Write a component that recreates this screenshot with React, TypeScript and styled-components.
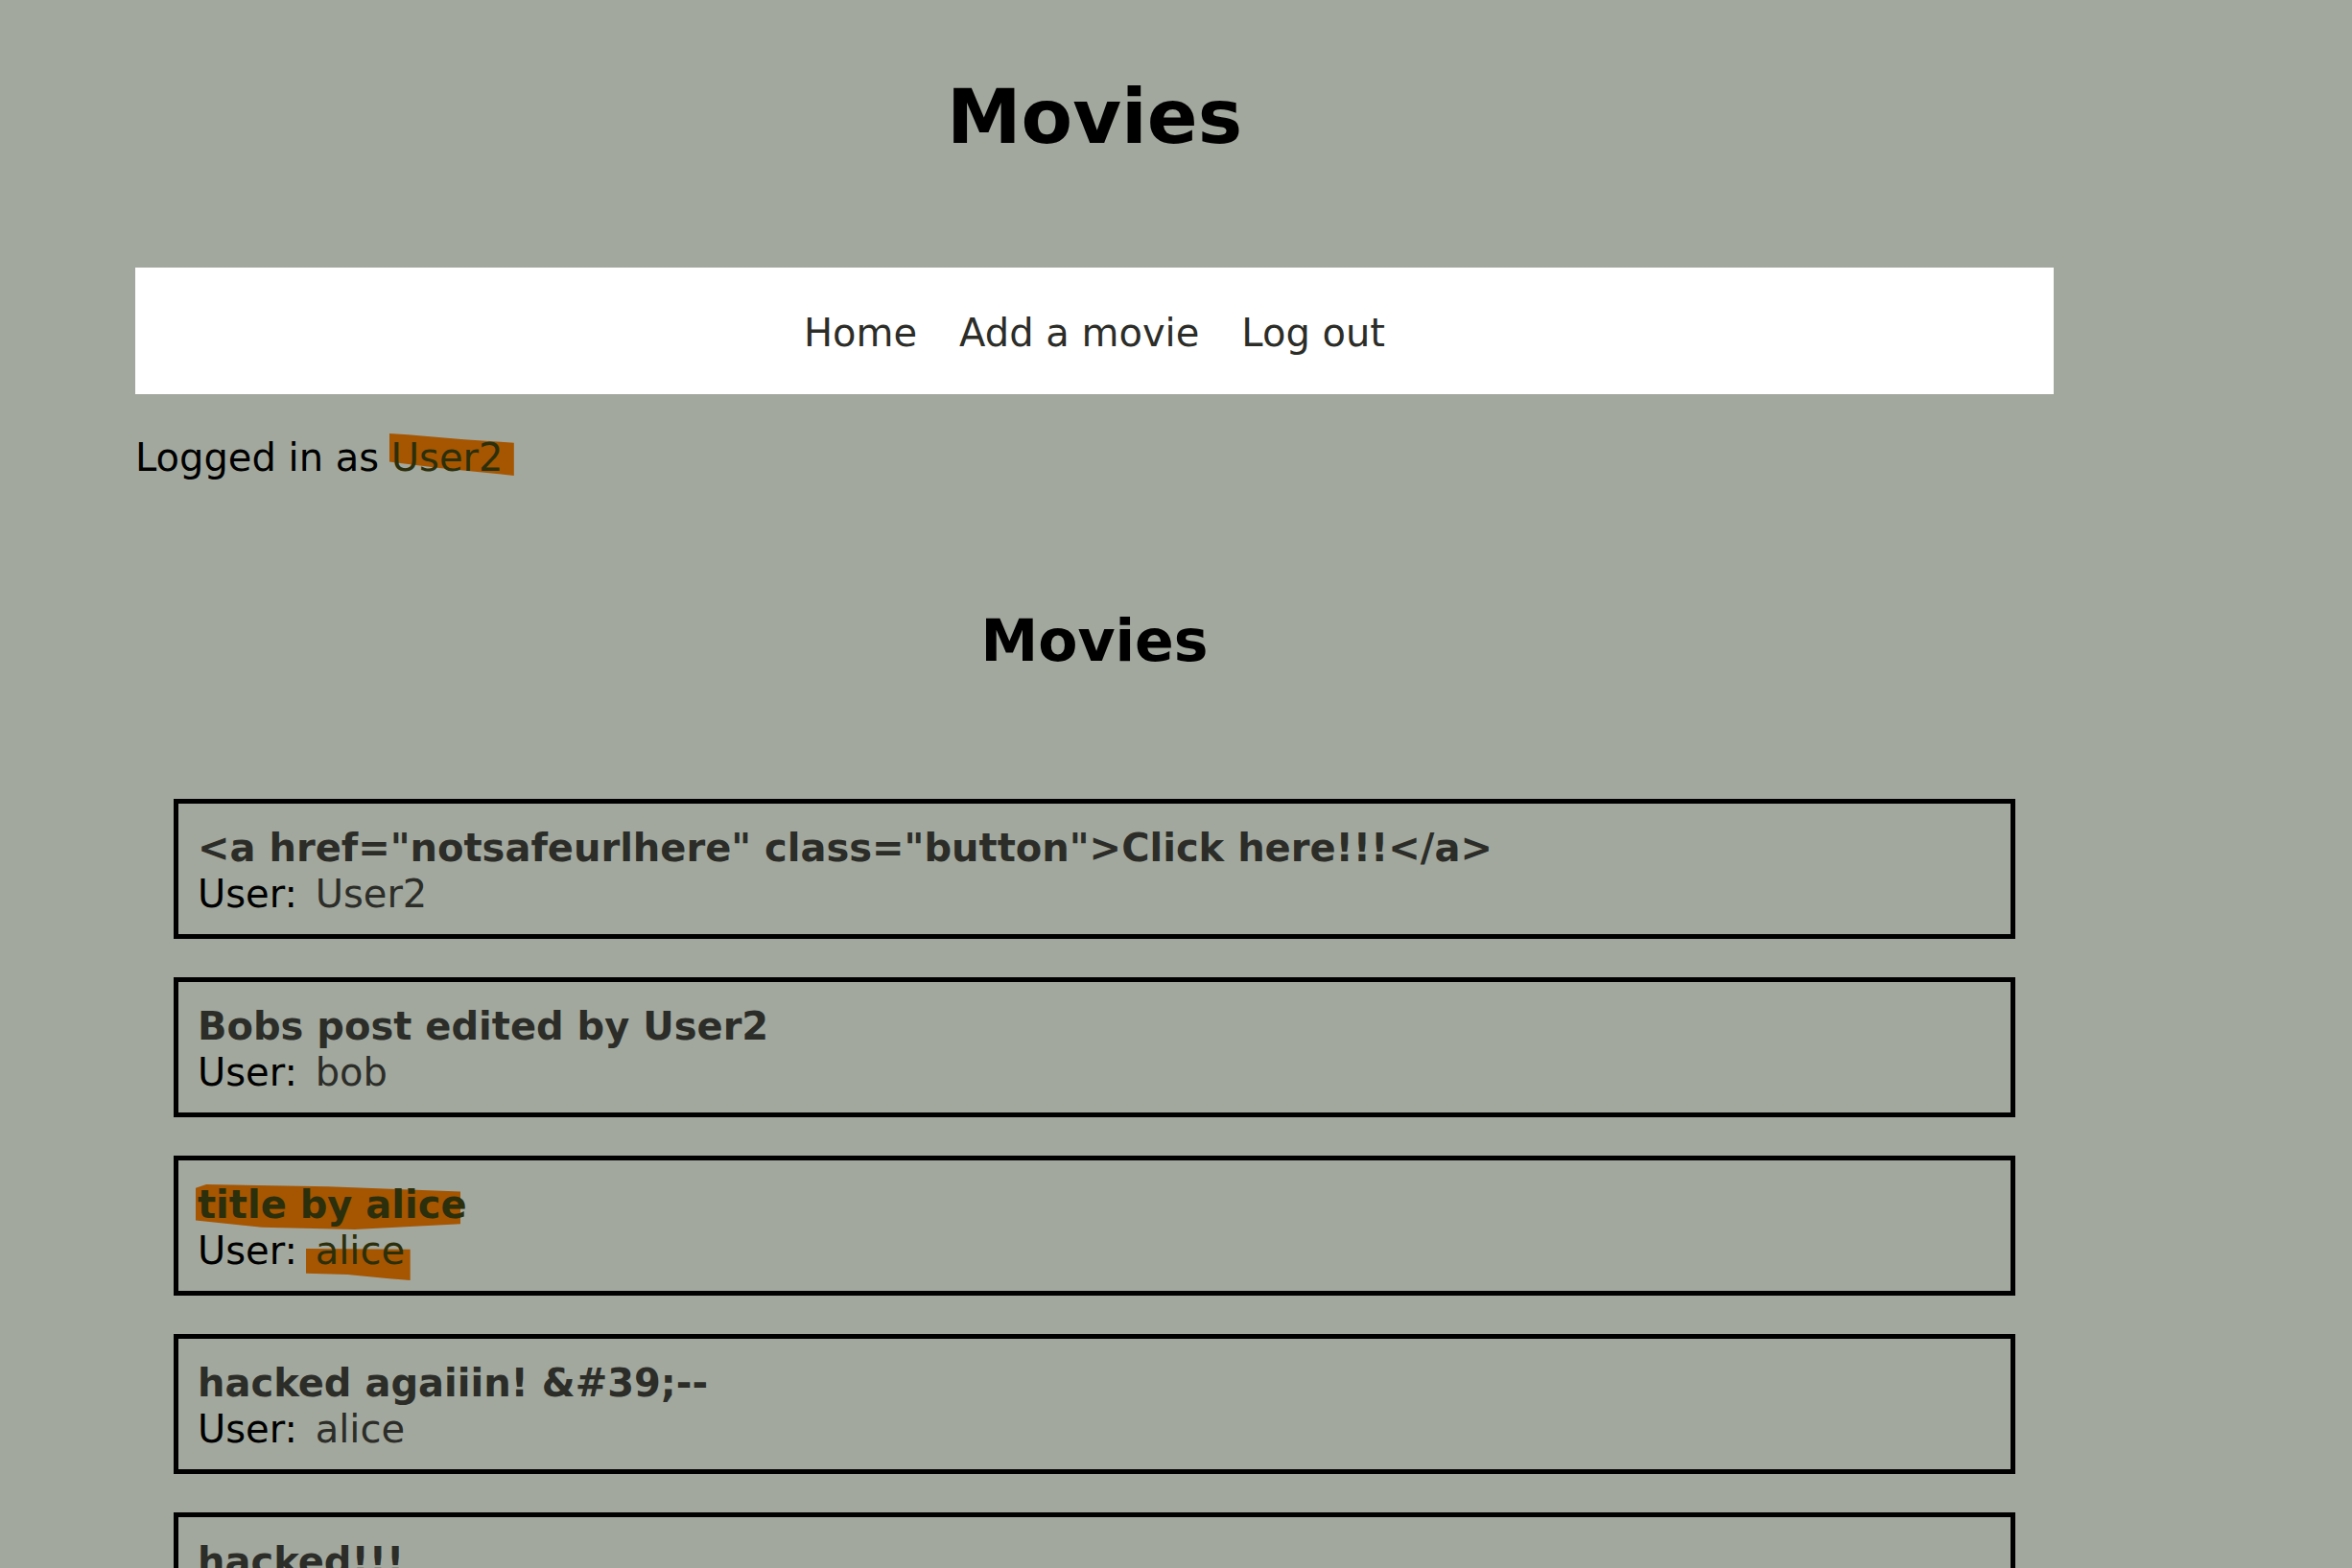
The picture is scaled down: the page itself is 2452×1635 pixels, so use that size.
import React from "react";
import styled, { createGlobalStyle } from "styled-components";

const GlobalStyle = createGlobalStyle`
  html, body {
    margin: 0;
    padding: 0;
    background: #a2a89e;
  }
  body {
    font-family: "DejaVu Sans", Verdana, sans-serif;
    font-size: 40px;
    color: #000;
  }
`;

const Page = styled.div`
  width: 2000px;
  margin-left: 141px;
  padding-bottom: 80px;
`;

const Title = styled.h1`
  margin: 77px 0 0;
  font-size: 78px;
  font-weight: bold;
  line-height: normal;
  text-align: center;
  color: #000;
`;

const Nav = styled.nav`
  box-sizing: border-box;
  margin-top: 112px;
  height: 132px;
  padding-top: 45px;
  background: #ffffff;
  display: flex;
  justify-content: center;
  gap: 44px;
  line-height: normal;
`;

const NavLink = styled.a`
  color: #2c2d28;
  text-decoration: none;
  cursor: pointer;
`;

const Status = styled.p`
  margin: 43px 0 0;
  line-height: normal;
  color: #000;
`;

const Marker = styled.span<{ $box: string; $clip: string }>`
  position: relative;
  z-index: 0;
  color: #2b2f0c;
  &::before {
    content: "";
    position: absolute;
    z-index: -1;
    ${(p) => p.$box}
    background: #a65500;
    clip-path: polygon(${(p) => p.$clip});
  }
`;

const SectionTitle = styled.h2`
  margin: 133px 0 0;
  font-size: 60px;
  font-weight: bold;
  line-height: normal;
  text-align: center;
  color: #000;
`;

const MovieList = styled.ul`
  list-style: none;
  margin: 130px 40px 0;
  padding: 0;
  display: flex;
  flex-direction: column;
  gap: 40px;
`;

const MovieCard = styled.li`
  border: 5px solid #000;
  padding: 22px 20px 18px;
  line-height: 48px;
`;

const MovieName = styled.div`
  font-weight: bold;
  color: #2c2d28;
`;

const UserLine = styled.div`
  color: #000;
`;

const UserValue = styled.span`
  margin-left: 6px;
  color: #2c2d28;
`;

type Movie = {
  title: string;
  user: string;
  titleMark?: boolean;
  userMark?: boolean;
};

const movies: Movie[] = [
  { title: '<a href="notsafeurlhere" class="button">Click here!!!</a>', user: "User2" },
  { title: "Bobs post edited by User2", user: "bob" },
  { title: "title by alice", user: "alice", titleMark: true, userMark: true },
  { title: "hacked agaiiin! &#39;--", user: "alice" },
  { title: "hacked!!!", user: "alice" },
];

export default function App() {
  return (
    <>
      <GlobalStyle />
      <Page>
        <Title>Movies</Title>
        <Nav>
          <NavLink>Home</NavLink>
          <NavLink>Add a movie</NavLink>
          <NavLink>Log out</NavLink>
        </Nav>
        <Status>
          Logged in as{" "}
          <Marker
            $box="left: -2px; top: -2px; width: 130px; height: 44px;"
            $clip="0% 0%, 15% 3%, 60% 14%, 100% 22%, 100% 100%, 88% 96%, 40% 82%, 0% 67%"
          >
            User2
          </Marker>
        </Status>
        <SectionTitle>Movies</SectionTitle>
        <MovieList>
          {movies.map((m, i) => (
            <MovieCard key={i}>
              <MovieName>
                {m.titleMark ? (
                  <Marker
                    $box="left: -2px; top: 2px; width: 276px; height: 47px;"
                    $clip="0% 8%, 4% 0%, 50% 5%, 100% 16%, 100% 88%, 60% 100%, 25% 95%, 0% 80%"
                  >
                    {m.title}
                  </Marker>
                ) : (
                  m.title
                )}
              </MovieName>
              <UserLine>
                User:
                {m.userMark ? (
                  <UserValue>
                    {" "}
                    <Marker
                      $box="left: -10px; top: 21px; width: 109px; height: 33px;"
                      $clip="0% 0%, 100% 2%, 100% 100%, 80% 95%, 40% 82%, 0% 78%"
                    >
                      {m.user}
                    </Marker>
                  </UserValue>
                ) : (
                  <UserValue> {m.user}</UserValue>
                )}
              </UserLine>
            </MovieCard>
          ))}
        </MovieList>
      </Page>
    </>
  );
}
